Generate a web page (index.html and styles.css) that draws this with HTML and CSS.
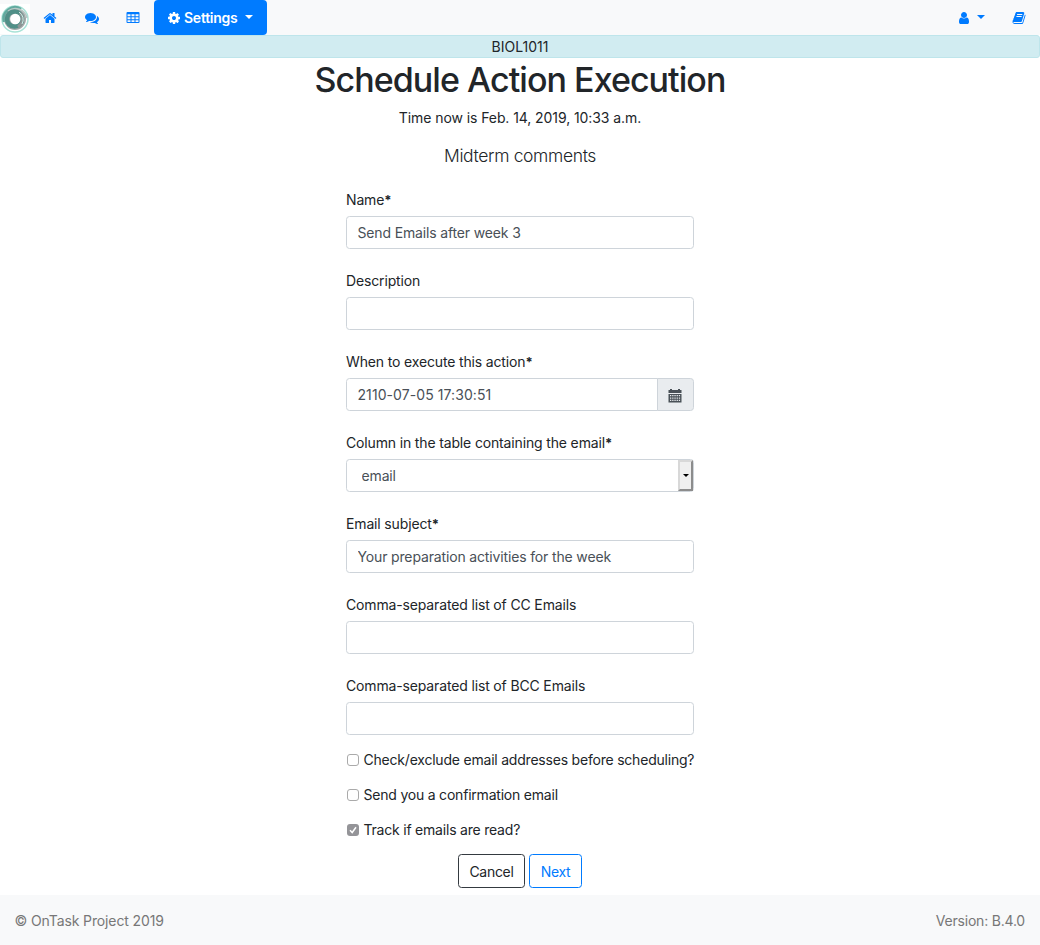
FILE: index.html
```html
<!DOCTYPE html>
<html lang="en">
<head>
<meta charset="utf-8">
<title>Schedule Action Execution</title>
<link rel="stylesheet" href="styles.css">
</head>
<body>
<nav class="navbar">
  <a class="brand" href="#"><svg width="30" height="30" viewBox="0 0 30 30">
    <rect width="30" height="30" fill="#fff"/>
    <circle cx="15" cy="15" r="13" fill="none" stroke="#a9e3d7" stroke-width="1.5"/>
    <circle cx="15" cy="15" r="11" fill="#a3a9a9"/>
    <path d="M4 18A11.5 11.5 0 0 1 21 5" fill="none" stroke="#62aa9f" stroke-width="2.5"/>
    <path d="M8 7A12 12 0 0 1 27 14" fill="none" stroke="#b8c8c5" stroke-width="1.5"/>
    <circle cx="14.5" cy="15" r="7.5" fill="none" stroke="#508f87" stroke-width="4.5"/>
    <path d="M20 9A9 9 0 0 1 18 23" fill="none" stroke="#8d9696" stroke-width="3"/>
    <path d="M19 8A9 9 0 0 1 22 20" fill="none" stroke="#c8f0e8" stroke-width="1"/>
    <circle cx="15.3" cy="15" r="5.2" fill="#fff"/>
  </svg></a>
  <a class="nav-icon" href="#"><svg class="icon" viewBox="0 0 1792 1792"><path d="M1472 992v480q0 26-19 45t-45 19h-384v-384h-256v384h-384q-26 0-45-19t-19-45v-480q0-1 .5-3t.5-3l575-474 575 474q1 2 1 6zm223-69l-62 74q-8 9-21 11h-3q-13 0-21-7l-692-577-692 577q-12 8-24 7-13-2-21-11l-62-74q-8-10-7-23.5t11-21.5l719-599q32-26 76-26t76 26l244 204v-195q0-14 9-23t23-9h192q14 0 23 9t9 23v408l219 182q10 8 11 21.5t-7 23.5z"/></svg></a>
  <a class="nav-icon" href="#"><svg class="icon" viewBox="0 0 1792 1792"><path d="M1408 768q0 139-94 257t-256.5 186.5-353.5 68.5q-86 0-176-16-124 88-278 128-36 9-86 16h-3q-11 0-20.5-8t-11.5-21q-1-3-1-6.5t.5-6.5 2-6l2.5-5 3.5-5.5 4-5 4.5-5 4-4.5q5-6 23-25t26-29.5 22.5-29 25-38.5 20.5-44q-124-72-195-177t-71-224q0-139 94-257t256.5-186.5 353.5-68.5 353.5 68.5 256.5 186.5 94 257zm384 256q0 120-71 224.5t-195 176.5q10 24 20.5 44t25 38.5 22.5 29 26 29.5 23 25q1 1 4 4.5t4.5 5 4 5 3.5 5.5l2.5 5 2 6 .5 6.5-1 6.5q-3 14-13 22t-22 7q-50-7-86-16-154-40-278-128-90 16-176 16-271 0-472-132 58 4 88 4 161 0 309-45t264-129q125-92 192-212t67-254q0-77-23-152 129 71 204 178t75 230z"/></svg></a>
  <a class="nav-icon" href="#"><svg class="icon" viewBox="0 0 14 14"><path fill-rule="evenodd" d="M1.5 1h11a1 1 0 0 1 1 1v9a1 1 0 0 1-1 1h-11a1 1 0 0 1-1-1v-9a1 1 0 0 1 1-1zM1.5 3.2h3v2h-3zM5.5 3.2h3v2h-3zM9.5 3.2h3v2h-3zM1.5 6.2h3v2h-3zM5.5 6.2h3v2h-3zM9.5 6.2h3v2h-3zM1.5 9.2h3v1.9h-3zM5.5 9.2h3v1.9h-3zM9.5 9.2h3v1.9h-3z"/></svg></a>
  <a class="settings" href="#"><svg class="icon" viewBox="0 0 1792 1792"><path d="M1152 896q0-106-75-181t-181-75-181 75-75 181 75 181 181 75 181-75 75-181zm512-109v222q0 12-8 23t-20 13l-185 28q-19 54-39 91 35 50 107 138 10 12 10 25t-9 23q-27 37-99 108t-94 71q-12 0-26-9l-138-108q-44 23-91 38-16 136-29 186-7 28-36 28h-222q-14 0-24.5-8.5t-11.5-21.5l-28-184q-49-16-90-37l-141 107q-10 9-25 9-14 0-25-11-126-114-165-168-7-10-7-23 0-12 8-23 15-21 51-66.5t54-70.5q-27-50-41-99l-183-27q-13-2-21-12.5t-8-23.5v-222q0-12 8-23t19-13l186-28q14-46 39-92-40-57-107-138-10-12-10-24 0-10 9-23 26-36 98.5-107.5t94.5-71.5q13 0 26 10l138 107q44-23 91-38 16-136 29-186 7-28 36-28h222q14 0 24.5 8.5t11.5 21.5l28 184q49 16 90 37l142-107q9-9 24-9 13 0 25 10 129 119 165 170 7 8 7 22 0 12-8 23-15 21-51 66.5t-54 70.5q26 50 41 98l183 28q13 2 21 12.5t8 23.5z"/></svg><span>Settings</span><i class="caret"></i></a>
  <a class="user" href="#"><svg class="icon" viewBox="0 0 1792 1792"><path d="M1536 1399q0 109-62.5 187t-150.5 78h-854q-88 0-150.5-78t-62.5-187q0-85 8.5-160.5t31.5-152 58.5-131 94-89 134.5-34.5q131 128 313 128t313-128q76 0 134.5 34.5t94 89 58.5 131 31.5 152 8.5 160.5zm-256-887q0 159-112.5 271.5t-271.5 112.5-271.5-112.5-112.5-271.5 112.5-271.5 271.5-112.5 271.5 112.5 112.5 271.5z"/></svg><i class="caret"></i></a>
  <a class="docs" href="#"><svg class="icon" viewBox="0 0 1792 1792"><path d="M1703 478q40 57 18 129l-275 906q-19 64-76.5 107.5t-122.5 43.5h-923q-77 0-148.5-53.5t-99.5-131.5q-24-67-2-127 0-4 3-27t4-37q1-8-3-21.5t-3-19.5q2-11 8-21t16.5-23.5 16.5-23.5q23-38 45-91.5t30-91.5q3-10 .5-30t-.5-28q3-11 17-28t17-23q21-36 42-92t25-90q1-9-2.5-32t.5-28q4-13 22-30.5t22-22.5q19-26 42.5-84.5t27.5-96.5q1-8-3-25.5t-2-26.5q2-8 9-18t18-23 17-21q8-12 16.5-30.5t15-35 16-36 19.5-32 26.5-23.5 36-11.5 47.5 5.5l-1 3q38-9 51-9h761q74 0 114 56t18 130l-274 906q-36 119-71.5 153.5t-128.5 34.5h-869q-27 0-38 15-11 16-1 43 24 70 144 70h923q29 0 56-15.5t35-41.5l300-987q7-22 5-57 38 15 59 43zm-1064 2q-4 13 2 22.5t20 9.5h608q13 0 25.5-9.5t16.5-22.5l21-64q4-13-2-22.5t-20-9.5h-608q-13 0-25.5 9.5t-16.5 22.5zm-83 256q-4 13 2 22.5t20 9.5h608q13 0 25.5-9.5t16.5-22.5l21-64q4-13-2-22.5t-20-9.5h-608q-13 0-25.5 9.5t-16.5 22.5z"/></svg></a>
</nav>
<div class="workflow">BIOL1011</div>
<main>
  <h1>Schedule Action Execution</h1>
  <p class="now">Time now is Feb. 14, 2019, 10:33 a.m.</p>
  <h2>Midterm comments</h2>
  <form class="form">
    <div class="group"><label for="name">Name<b>*</b></label><input class="control" id="name" value="Send Emails after week 3"></div>
    <div class="group"><label for="desc">Description</label><input class="control" id="desc"></div>
    <div class="group"><label for="when">When to execute this action<b>*</b></label>
      <div class="input-group"><input class="control date" id="when" value="2110-07-05 17:30:51"><span class="addon"><svg width="14" height="14" viewBox="0 0 14 14"><path fill="#495057" fill-rule="evenodd" d="M1 1h1V0h2v1h6V0h2v1h1.5v3H.5V1zM.5 5h13v8.5H.5zM2 6v1.3h1.3V6zM4.2 6v1.3h1.3V6zM6.4 6v1.3h1.3V6zM8.6 6v1.3h1.3V6zM10.8 6v1.3h1.3V6zM2 8.4v1.3h1.3V8.4zM4.2 8.4v1.3h1.3V8.4zM6.4 8.4v1.3h1.3V8.4zM8.6 8.4v1.3h1.3V8.4zM10.8 8.4v1.3h1.3V8.4zM2 10.8v1.3h1.3v-1.3zM4.2 10.8v1.3h1.3v-1.3zM6.4 10.8v1.3h1.3v-1.3zM8.6 10.8v1.3h1.3v-1.3zM10.8 10.8v1.3h1.3v-1.3z"/></svg></span></div></div>
    <div class="group"><label for="col">Column in the table containing the email<b>*</b></label>
      <div class="select"><select id="col"><option>email</option></select><span class="select-button"><i></i></span></div></div>
    <div class="group"><label for="subject">Email subject<b>*</b></label><input class="control" id="subject" value="Your preparation activities for the week"></div>
    <div class="group"><label for="cc">Comma-separated list of CC Emails</label><input class="control" id="cc"></div>
    <div class="group last"><label for="bcc">Comma-separated list of BCC Emails</label><input class="control" id="bcc"></div>
    <label class="check"><span class="box"></span><span>Check/exclude email addresses before scheduling?</span></label>
    <label class="check"><span class="box"></span><span>Send you a confirmation email</span></label>
    <label class="check"><span class="box checked"><svg width="12" height="12" viewBox="0 0 12 12"><path d="M3 6.2l2.2 2.3L9 3.2" fill="none" stroke="#fff" stroke-width="1.5"/></svg></span><span>Track if emails are read?</span></label>
    <div class="actions"><button type="button" class="btn cancel">Cancel</button><button type="button" class="btn next">Next</button></div>
  </form>
</main>
<footer class="footer"><span>© OnTask Project 2019</span><span class="version">Version: B.4.0</span></footer>
</body>
</html>
```
FILE: styles.css
```css
* { box-sizing: border-box; }
body { margin: 0; height: 945px; display: flex; flex-direction: column; background: #fff; color: #212529; font: 14px/21px Inter, sans-serif; }
.navbar { height: 35px; display: flex; align-items: center; background: #f8f9fa; color: #007bff; }
.navbar a { color: inherit; text-decoration: none; display: flex; align-items: center; }
.brand { margin: 2px 5.4px 0 0; }
.icon { width: 14px; height: 14px; fill: currentColor; display: block; }
.nav-icon { width: 41.5px; padding-left: 8px; height: 35px; }
.navbar .settings { width: 113px; height: 35px; background: #007bff; color: #fff; border-radius: 4px; padding-left: 13px; margin-left: -5.9px; font-weight: 600; letter-spacing: -.25px; }
.settings span { margin: 0 7px 0 3px; }
.caret { border: 4px solid transparent; border-top-color: currentColor; border-bottom: 0; margin-bottom: 1px; }
.user { margin-left: auto; margin-right: 27.6px; }
.user .caret { margin-left: 6px; }
.docs { margin-right: 13.9px; }
.workflow { height: 23px; line-height: 22px; border: 1px solid #bee5eb; border-radius: 3px; background: #d1ecf1; text-align: center; }
main { flex: 1; text-align: center; }
h1 { margin: 0 0 6px; padding-top: 1px; font-size: 34px; line-height: 42px; font-weight: 500; letter-spacing: -.95px; }
.now { margin: 0; letter-spacing: -.08px; }
h2 { margin: 16px 0 0; font-size: 17.5px; line-height: 23px; font-weight: 300; letter-spacing: -.36px; }
.form { width: 348px; margin: 22px auto 0; text-align: left; letter-spacing: -.15px; }
.group { margin-bottom: 21px; }
.group.last { margin-bottom: 14px; }
.group label { display: block; height: 21px; margin-bottom: 6px; }
.group b { font-size: 13px; }
.control { display: block; width: 100%; height: 33px; padding: 0 10.5px 1px; border: 1px solid #ced4da; border-radius: 3.5px; background: #fff; color: #495057; font: inherit; letter-spacing: inherit; outline: 0; }
.input-group { display: flex; }
.date { flex: 1; min-width: 0; border-radius: 3.5px 0 0 3.5px; letter-spacing: .08px; }
.addon { width: 37px; margin-left: -1px; padding: 2px 2px 0 0; display: flex; align-items: center; justify-content: center; border: 1px solid #ced4da; border-radius: 0 3.5px 3.5px 0; background: #e9ecef; }
.select { display: flex; height: 33px; border: 1px solid #ced4da; border-radius: 3.5px; }
.select select { flex: 1; appearance: none; border: 0; padding: 0 14.5px; background: transparent; color: #495057; font: inherit; letter-spacing: inherit; }
.select-button { width: 15px; display: flex; align-items: center; justify-content: center; border: 2px solid #d8d8d8; border-right-color: #8c8c8c; border-bottom-color: #8c8c8c; background: #efefef; }
.select-button i { border: 3px solid transparent; border-top-color: #000; border-bottom: 0; }
.check { display: flex; align-items: center; height: 21px; margin-bottom: 14px; white-space: nowrap; letter-spacing: -.21px; }
.box { width: 12px; height: 12px; margin: 0 4.5px 0 1px; border: 1px solid #aaa; border-radius: 3px; flex: none; }
.box.checked { border: 0; background: #949498; }
.box svg { display: block; }
.actions { display: flex; justify-content: center; gap: 4px; }
.btn { height: 34px; padding: 0; border: 1px solid; border-radius: 3.5px; background: #fff; font: inherit; letter-spacing: -.3px; }
.cancel { width: 67px; color: #212529; border-color: #343a40; }
.next { width: 53px; color: #007bff; }
.footer { height: 50px; padding: 1px 15px 0 14.5px; display: flex; justify-content: space-between; align-items: center; background: #f8f9fa; color: #777; letter-spacing: -.12px; }
.version { letter-spacing: -.2px; }
```
